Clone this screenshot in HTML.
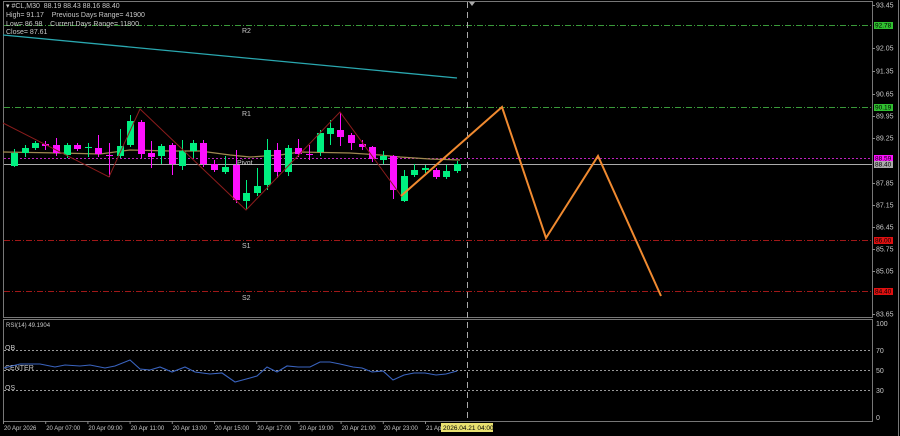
<!DOCTYPE html>
<html><head><meta charset="utf-8"><style>
html,body{margin:0;padding:0;background:#000;width:900px;height:436px;overflow:hidden}
svg{display:block}
text{font-family:"Liberation Sans",sans-serif;font-size:7px;fill:#c8c8c8;white-space:pre}
</style></head><body>
<svg id="s" width="900" height="436" viewBox="0 0 900 436" xmlns="http://www.w3.org/2000/svg">
<rect width="900" height="436" fill="#000"/>
<rect x="3.5" y="1.5" width="869" height="316" fill="none" stroke="#777" stroke-width="1"/>
<rect x="3.5" y="319.5" width="869" height="102" fill="none" stroke="#777" stroke-width="1"/>
<line x1="898.5" y1="0" x2="898.5" y2="436" stroke="#777"/>
<line x1="4" y1="25.5" x2="872" y2="25.5" stroke="#3a9a3a" stroke-dasharray="6,2,1,2"/>
<line x1="4" y1="107.5" x2="872" y2="107.5" stroke="#3a9a3a" stroke-dasharray="6,2,1,2"/>
<line x1="4" y1="158.5" x2="872" y2="158.5" stroke="#c020c0" stroke-dasharray="2,2"/>
<line x1="4" y1="164.5" x2="872" y2="164.5" stroke="#aaa"/>
<line x1="4" y1="240.5" x2="872" y2="240.5" stroke="#a01818" stroke-dasharray="6,2,1,2"/>
<line x1="4" y1="291.5" x2="872" y2="291.5" stroke="#a01818" stroke-dasharray="6,2,1,2"/>
<line x1="467.5" y1="2" x2="467.5" y2="421" stroke="#aaa" stroke-dasharray="6,4"/>
<polygon points="469,2 475,2 472,6" fill="#aaa"/>
<text x="242" y="33">R2</text><text x="242" y="116">R1</text><text x="237" y="165">Pivot</text>
<text x="242" y="248">S1</text><text x="242" y="300">S2</text>
<polyline points="3,35 457,78" fill="none" stroke="#2aa8b0" stroke-width="1.3"/>
<polyline points="3,152 60,153 100,154 130,150 170,151 200,151 230,155 250,157 280,155 300,152 350,153 380,155 400,157 430,159 460,160" fill="none" stroke="#a08a50" stroke-width="1.2"/>
<g id="c"></g>
<polyline points="3,123 109,177 140,109 246,210 340,112 402,197" fill="none" stroke="#8b1c1c" stroke-width="1"/>
<polyline points="401,196 502,107 546,238 598,156 661,296" fill="none" stroke="#f08a30" stroke-width="2"/>
<text x="6" y="8">▾ #CL,M30  88.19 88.43 88.16 88.40</text>
<text x="6" y="17">High= 91.17    Previous Days Range= 41900</text>
<text x="6" y="26">Low= 86.98    Current Days Range= 11800</text>
<text x="6" y="34">Close= 87.61</text>
<g id="p"></g>
<line x1="4" y1="350.5" x2="872" y2="350.5" stroke="#999" stroke-dasharray="2,2"/>
<line x1="4" y1="370.5" x2="872" y2="370.5" stroke="#999" stroke-dasharray="2,2"/>
<line x1="4" y1="390.5" x2="872" y2="390.5" stroke="#999" stroke-dasharray="2,2"/>
<text x="6" y="327" style="font-size:6px">RSI(14) 49.1904</text>
<text x="5" y="350">OB</text>
<text x="5" y="370">CENTER</text>
<text x="5" y="390">OS</text>
<polyline points="4,368 20,364 40,364 55,367 65,365 80,366 90,365 105,368 115,366 130,360 140,369 150,370 160,367 172,372 185,367 195,372 210,374 222,373 235,382 250,378 257,376 267,367 277,372 287,366 298,367 310,367 320,362 330,362 340,364 353,367 362,368 372,372 383,371 393,380 404,375 414,373 425,373 436,375 446,374 457,371" fill="none" stroke="#3a64c0" stroke-width="1.1"/>
<text x="876" y="326">100</text><text x="876" y="353">70</text><text x="876" y="373">50</text><text x="876" y="393">30</text><text x="876" y="420">0</text>
<g id="t" style="font-size:6px"></g>
<rect x="441" y="423" width="52" height="9" fill="#e8e070"/>
<text x="443" y="430" style="font-size:6.5px;fill:#000">2026.04.21 04:00</text>
</svg>
<script>
var NS="http://www.w3.org/2000/svg";
function el(p,t,a,txt){var e=document.createElementNS(NS,t);for(var k in a)e.setAttribute(k,a[k]);if(txt)e.textContent=txt;document.getElementById(p).appendChild(e);}
var C=[[14,153,166,149,167,1],[25,148,153,145,157,1],[35,143,148,141,150,1],[45,144,146,141,150,0],[56,145,153,138,156,0],[67,145,155,143,158,1],[77,145,149,143,151,0],[88,147,148,143,157,1],[98,148,154,135,157,0],[109,155,156,143,177,0],[120,146,156,129,158,1],[130,121,145,115,147,1],[141,122,154,120,158,0],[151,153,157,141,168,0],[161,146,156,144,164,1],[172,145,164,143,175,0],[182,151,166,140,170,1],[193,143,151,140,158,1],[203,143,164,140,167,0],[214,164,170,160,172,0],[225,167,172,156,174,1],[236,165,200,150,203,0],[246,193,201,180,209,1],[257,186,193,168,196,1],[267,150,185,139,190,1],[277,150,172,143,178,0],[288,148,172,145,176,1],[298,148,154,139,157,0],[309,154,155,145,160,0],[320,133,152,130,156,1],[330,128,134,120,145,1],[340,130,137,113,146,0],[351,135,143,133,150,0],[362,144,147,140,150,0],[372,147,159,146,162,0],[383,156,160,151,164,1],[393,156,190,155,199,0],[404,176,201,170,202,1],[414,170,175,164,177,1],[425,168,170,165,173,1],[436,170,177,168,179,0],[446,171,177,165,179,1],[457,164,171,161,173,1]];
C.forEach(function(c){var col=c[5]?"#00f080":"#ff10ff";
el("c","line",{x1:c[0]+.5,x2:c[0]+.5,y1:c[3],y2:c[4],stroke:col});
el("c","rect",{x:c[0]-3,y:c[1],width:7,height:Math.max(1,c[2]-c[1]),fill:col});});
var P=[["93.45",5],["92.05",48],["91.35",71],["90.65",94],["89.95",116],["89.25",138],["87.85",183],["87.15",205],["86.45",227],["85.75",249],["85.05",271],["83.65",314]];
P.forEach(function(p){el("p","line",{x1:872,x2:875,y1:p[1]+.5,y2:p[1]+.5,stroke:"#888"});el("p","text",{x:876,y:p[1]+2.5},p[0]);});
var B=[["92.78",25,"#30c030"],["90.19",107,"#30c030"],["88.59",158,"#ff10ff"],["88.40",164,"#aaaaaa"],["86.00",240,"#e01010"],["84.40",291,"#e01010"]];
B.forEach(function(b){el("p","rect",{x:874,y:b[1]-3,width:19,height:7,fill:b[2]});el("p","text",{x:875,y:b[1]+2.5,style:"fill:#000;font-size:6.5px"},b[0]);});
var T=["20 Apr 2026","20 Apr 07:00","20 Apr 09:00","20 Apr 11:00","20 Apr 13:00","20 Apr 15:00","20 Apr 17:00","20 Apr 19:00","20 Apr 21:00","20 Apr 23:00","21 Ap"];
T.forEach(function(t,i){var x=3+i*42.2;el("t","line",{x1:x+.5,x2:x+.5,y1:421,y2:424,stroke:"#888"});el("t","text",{x:x+1,y:430,style:"font-size:6px"},t);});
</script>
</body></html>
